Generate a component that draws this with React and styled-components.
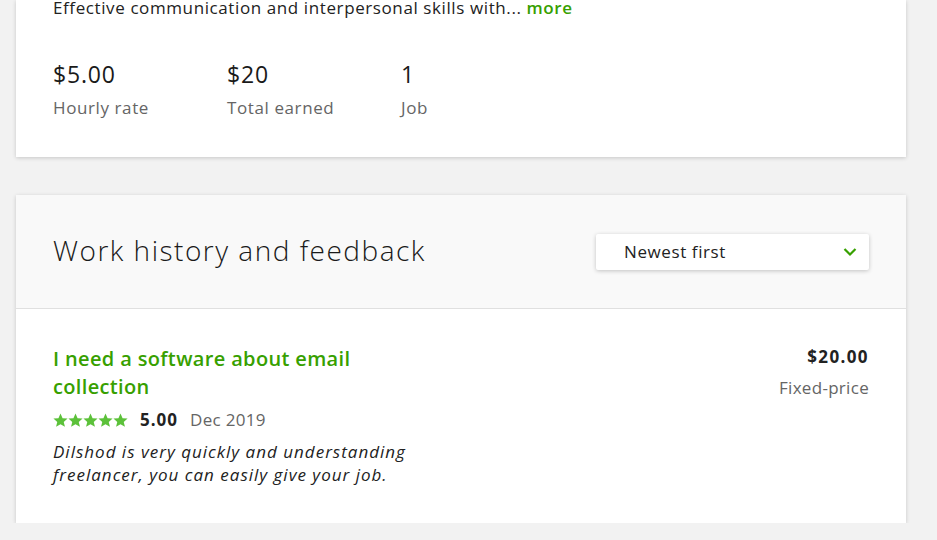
import styled, { createGlobalStyle } from "styled-components";

const GlobalStyle = createGlobalStyle`
  body {
    margin: 0;
    background: #f2f2f2;
    font-family: "Open Sans", "Liberation Sans", sans-serif;
    letter-spacing: 0.6px;
    color: #222;
  }
`;

const stats = [
  { value: "$5.00", label: "Hourly rate" },
  { value: "$20", label: "Total earned" },
  { value: "1", label: "Job" },
];

function Star() {
  return (
    <svg width="15" height="15" viewBox="0 0 24 24">
      <path
        fill="#5cc13a"
        d="M12 .8l3.3 7.4 8 .7-6.1 5.3 1.9 7.9L12 18l-7.1 4.1 1.9-7.9L.7 8.9l8-.7z"
      />
    </svg>
  );
}

export default function App() {
  return (
    <Page>
      <GlobalStyle />
      <Card>
        <Overview>
          <p className="summary">
            Effective communication and interpersonal skills with...{" "}
            <a href="#">more</a>
          </p>
          <StatsRow>
            {stats.map((s) => (
              <Stat key={s.label}>
                <span className="value">{s.value}</span>
                <span className="label">{s.label}</span>
              </Stat>
            ))}
          </StatsRow>
        </Overview>
      </Card>

      <Card>
        <HistoryHeader>
          <h2>Work history and feedback</h2>
          <SortSelect>
            <span>Newest first</span>
            <svg width="14" height="10" viewBox="0 0 14 10">
              <path
                d="M1.5 2l5.5 5.5L12.5 2"
                fill="none"
                stroke="#37a000"
                strokeWidth="2.2"
              />
            </svg>
          </SortSelect>
        </HistoryHeader>

        <JobRow>
          <div className="job-main">
            <a className="job-title" href="#">
              I need a software about email collection
            </a>
            <Rating>
              <span className="stars">
                {[0, 1, 2, 3, 4].map((i) => (
                  <Star key={i} />
                ))}
              </span>
              <strong>5.00</strong>
              <span className="date">Dec 2019</span>
            </Rating>
            <p className="feedback">
              Dilshod is very quickly and understanding freelancer, you can
              easily give your job.
            </p>
          </div>
          <div className="job-price">
            <strong>$20.00</strong>
            <span>Fixed-price</span>
          </div>
        </JobRow>
      </Card>
    </Page>
  );
}

const Page = styled.div`
  display: flex;
  flex-direction: column;
  gap: 38px;
  padding: 0 31px 0 16px;
  width: 890px;
`;

const Card = styled.section`
  background: #fff;
  box-shadow: 0 1px 4px rgba(0, 0, 0, 0.18);
  overflow: hidden;
`;

const Overview = styled.div`
  padding: 0 37px 38px;

  .summary {
    margin: -3px 0 0;
    font-size: 17px;
    line-height: 22px;
    color: #222;

    a {
      color: #37a000;
      font-weight: 600;
      text-decoration: none;
    }
  }
`;

const StatsRow = styled.div`
  display: flex;
  margin-top: 40px;
`;

const Stat = styled.div`
  width: 174px;
  display: flex;
  flex-direction: column;
  gap: 8px;

  .value {
    font-size: 23px;
    line-height: 30px;
    letter-spacing: 0.8px;
    color: #1a1a1a;
  }

  .label {
    font-size: 17px;
    line-height: 22px;
    color: #656565;
  }
`;

const HistoryHeader = styled.header`
  background: #f9f9f9;
  border-bottom: 1px solid #e0e0e0;
  height: 114px;
  padding: 0 37px;
  box-sizing: border-box;
  display: flex;
  align-items: center;
  justify-content: space-between;

  h2 {
    margin: 0 0 4px;
    font-size: 28px;
    font-weight: 300;
    letter-spacing: 1.5px;
    color: #1a1a1a;
  }
`;

const SortSelect = styled.div`
  width: 273px;
  height: 36px;
  box-sizing: border-box;
  background: #fff;
  border-radius: 2px;
  box-shadow: 0 1px 4px rgba(0, 0, 0, 0.22);
  display: flex;
  align-items: center;
  justify-content: space-between;
  padding: 0 12px 0 28px;
  font-size: 17px;
  color: #222;
`;

const JobRow = styled.div`
  display: flex;
  justify-content: space-between;
  padding: 36px 37px 37px;

  .job-main {
    width: 370px;
  }

  .job-title {
    display: block;
    color: #37a000;
    font-size: 20px;
    line-height: 28px;
    letter-spacing: 0.35px;
    font-weight: 600;
    text-decoration: none;
  }

  .feedback {
    margin: 9px 0 0;
    font-size: 17px;
    line-height: 23px;
    letter-spacing: 1px;
    font-style: italic;
    color: #222;
  }

  .job-price {
    display: flex;
    flex-direction: column;
    align-items: flex-end;
    gap: 9px;
    padding-top: 1px;

    strong {
      font-size: 17px;
      line-height: 22px;
      letter-spacing: 1.4px;
      font-weight: 700;
    }

    span {
      font-size: 17px;
      line-height: 22px;
      letter-spacing: 0.3px;
      color: #656565;
    }
  }
`;

const Rating = styled.div`
  display: flex;
  align-items: center;
  gap: 12px;
  margin-top: 8px;
  font-size: 17px;
  line-height: 22px;

  .stars {
    display: flex;
    gap: 0;
  }

  strong {
    font-weight: 700;
    letter-spacing: 1px;
    color: #222;
  }

  .date {
    letter-spacing: 0.3px;
    color: #656565;
  }
`;
